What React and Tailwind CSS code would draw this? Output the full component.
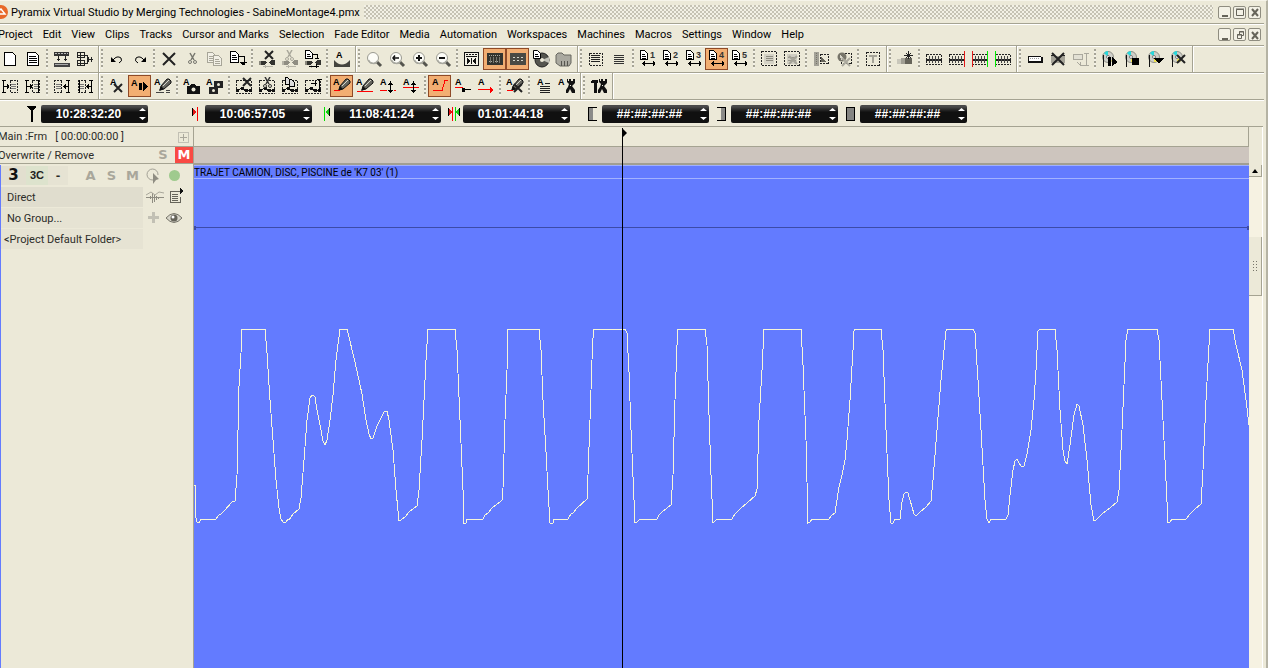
import clsx from "clsx";

const MENUS = [
  "Project", "Edit", "View", "Clips", "Tracks", "Cursor and Marks", "Selection",
  "Fade Editor", "Media", "Automation", "Workspaces", "Machines", "Macros",
  "Settings", "Window", "Help",
];

/* ---------- small drawing helpers, all on an 18x18 grid ---------- */

function Glyph({ children }) {
  return (
    <svg width="18" height="18" viewBox="0 0 18 18" shapeRendering="crispEdges" fill="none" stroke="none" aria-hidden="true" className="shrink-0">
      {children}
    </svg>
  );
}

function Letter({ x = 1, y = 8, color = "#000", children }) {
  return (
    <text x={x} y={y} fill={color} fontFamily="Liberation Sans, sans-serif" fontWeight="700" fontSize="9">
      {children}
    </text>
  );
}

function Sheet({ x = 0, y = 0, w = 9, h = 11, color = "#000", fill = "#fff", lines = true }) {
  return (
    <g transform={`translate(${x} ${y})`}>
      <path d={`M0.5 0.5h${w - 4}l3 3v${h - 4}h-${w - 1}z`} fill={fill} stroke={color} />
      {lines && <path d={`M2 4.5h${w - 5}M2 6.5h${w - 4}${h > 9 ? `M2 8.5h${w - 4}` : ""}`} stroke={color} />}
    </g>
  );
}

function Cross({ x = 0, y = 0, s = 8, color = "#222", w = 2 }) {
  return (
    <path
      d={`M${x} ${y}l${s} ${s}M${x + s} ${y}l-${s} ${s}`}
      stroke={color}
      strokeWidth={w}
      shapeRendering="auto"
    />
  );
}

function Lens({ children }) {
  return (
    <g shapeRendering="auto">
      <path d="M11 11l5 5" stroke="#55554f" strokeWidth="3" />
      <circle cx="8" cy="8" r="5.5" fill="#fdfdf8" stroke="#9a9a91" />
      <path d="M3.500 10a5 5 0 0 0 9 1" stroke="#a9a9a0" strokeWidth="1.500" />
      {children}
    </g>
  );
}

function Scissors({ x = 0, y = 0, color = "#333" }) {
  return (
    <g transform={`translate(${x} ${y})`} stroke={color} shapeRendering="auto">
      <path d="M2 0l4 7M7 0l-4 7" strokeWidth="1.500" />
      <circle cx="2" cy="9" r="1.500" />
      <circle cx="7" cy="9" r="1.500" />
    </g>
  );
}

function Pencil() {
  return (
    <g shapeRendering="auto">
      <path d="M6 13l1-4 6-7h2l2 2v2l-7 6z" fill="#66665f" stroke="#111" />
      <path d="M9 9l6-6" stroke="#d6d6cc" />
      <path d="M5 14l2-5 3 3z" fill="#111" />
    </g>
  );
}

function Reel({ dark = "#33332f", light = "#8a887d" }) {
  return (
    <>
      <path d="M1 11h3l3 2-2 2H1z" fill={light} />
      <path d="M3 11h4l2 2-3 2H3zM17 10h-4l-2 3 2 2h4z" fill={dark} />
      <path d="M5 16.500h10M7 15v3" stroke="#b5b3a6" />
    </>
  );
}

function DashBox({ x = 1.5, y = 1.5, w = 15, h = 14, color = "#222" }) {
  return <rect x={x} y={y} width={w} height={h} stroke={color} strokeDasharray="2 1" />;
}

function Disc() {
  return (
    <g shapeRendering="auto">
      <circle cx="7" cy="7" r="5.500" fill="#cfcfc8" stroke="#8f8f87" />
      <path d="M7 7L3 3a5 5 0 0 1 4-2z" fill="#27d8dc" />
      <path d="M7 7l4 4a5 5 0 0 1-4 1z" fill="#f0e34a" />
      <circle cx="7" cy="7" r="1.500" fill="#fff" stroke="#777" />
      <path d="M2.500 5v12" stroke="#111" />
    </g>
  );
}

const Recall = ({ n }) => (
  <>
    <Sheet x={1} y={0} w={8} h={10} />
    <Letter x={11} color="#333">{n}</Letter>
    <path d="M3 13.500h12M5 11v5M14 11v5M4 12v3M15 12v3" stroke="#000" />
  </>
);

const Film = ({ left, right }) => (
  <>
    <DashBox x={1.5} y={4.5} w={15} h={10} />
    <path d="M1 9.500h16" stroke="#222" strokeWidth="2" />
    <path d="M4.500 6v7M7.500 6v7M10.500 6v7M13.500 6v7" stroke="#444" />
    {left && <rect x="1" y="1" width="1" height="16" fill={left} />}
    {right && <rect x="16" y="1" width="1" height="16" fill={right} />}
  </>
);

const Jump = ({ flip, inner }) => (
  <g transform={flip ? "translate(18 0) scale(-1 1)" : undefined}>
    <path d="M2.500 3v13M1 3.500h4M1 15.500h4M3 9.500h5M6 7v5M7 8v3" stroke="#000" />
    <rect x={inner ? 8.5 : 9.5} y="3.500" width="7" height="12" stroke="#222" strokeDasharray="2 1" />
    <path d="M10 7.500h5M10 9.500h5M10 11.500h5" stroke="#777" />
    {inner && <path d="M14.500 3v13" stroke="#000" />}
  </g>
);

const Curve = ({ children }) => (
  <>
    <DashBox y={3.5} h={13} />
    <path d="M2 14l5-3 4 3 5-1" stroke="#111" />
    <path d="M1 12h3v3H1zM6 10h3v3H6zM10 12h3v3h-3zM14 12h3v3h-3z" fill="#111" />
    {children}
  </>
);

const Wrench = () => (
  <g shapeRendering="auto">
    <path d="M9 2v3l2 2-1 3-2 3v3h2l2-4 2 4h3v-3l-3-4 3-3V2h-2v2h-2V2h-2v2h-1V2z" fill="#111" />
    <path d="M12 8l1 1" stroke="#ece9d8" />
  </g>
);

const ICONS = {
  new: <Sheet x={3} y={2} w={12} h={14} lines={false} />,
  open: (
    <>
      <Sheet x={3} y={2} w={12} h={14} />
      <path d="M5 12.500h8" stroke="#000" />
    </>
  ),
  machine: (
    <>
      <path d="M1 2h15v4H1z" fill="#333" />
      <path d="M2 3.500h13" stroke="#bbb" strokeDasharray="2 1" />
      <path d="M5.500 6v5M12.500 6v5M4 9.500h3M11 9.500h3" stroke="#222" />
      <path d="M1 13h16v4H1z" fill="#444" />
      <path d="M2 14.500h13" stroke="#aaa" />
    </>
  ),
  routing: (
    <>
      <path d="M1 2.500h7v5H1zM1 10.500h7v5H1zM4.500 2v14M1 5.500h7M1 13.500h7" stroke="#222" />
      <path d="M8 5.500h3v8H8M11 9.500h6M12.500 7v5M15.500 7v5" stroke="#222" />
    </>
  ),
  undo: (
    <g shapeRendering="auto">
      <path d="M5 10q4-5 8-2 2 3-2 5" stroke="#000" />
      <path d="M3 7v5h5z" fill="#000" />
    </g>
  ),
  redo: (
    <g shapeRendering="auto">
      <path d="M13 10q-4-5-8-2-2 3 2 5" stroke="#000" />
      <path d="M15 7v5h-5z" fill="#000" />
    </g>
  ),
  delete: <Cross x={3} y={3} s={12} />,
  cut: <Scissors x={5} y={3} color="#77776f" />,
  copy: (
    <>
      <Sheet x={1} y={2} w={9} h={11} color="#a7a598" fill="#f2f0e6" />
      <Sheet x={7} y={5} w={9} h={11} color="#a7a598" fill="#f2f0e6" />
    </>
  ),
  paste: (
    <>
      <Sheet x={1} y={1} w={9} h={12} />
      <path d="M10 6.500h5v8M12 12.500h6" stroke="#000" />
      <path d="M11 12h6l-3 4z" fill="#000" />
    </>
  ),
  rippleDelete: (
    <>
      <Reel />
      <Cross x={7} y={1} s={8} />
    </>
  ),
  rippleCut: (
    <>
      <Reel dark="#8f8d82" light="#b5b3a6" />
      <Scissors x={4} y={0} color="#a9a79b" />
    </>
  ),
  ripplePaste: (
    <>
      <Reel />
      <Sheet x={1} y={0} w={8} h={9} />
      <path d="M9 4.500h4v4M11 8.500h4M5 16.500h10M12 14v4" stroke="#000" />
    </>
  ),
  fade: (
    <>
      <Letter x={3}>A</Letter>
      <path d="M1 10q8 9 16 0v7H1z" fill="#44443e" shapeRendering="auto" />
    </>
  ),
  zoom: <Lens />,
  zoomLeft: <Lens><path d="M5 8h6M7 5.500L5 8l2 2.500" stroke="#111" strokeWidth="1.500" /></Lens>,
  zoomIn: <Lens><path d="M5 8h6M8 5v6" stroke="#111" strokeWidth="2" /></Lens>,
  zoomOut: <Lens><path d="M5 8h6" stroke="#111" strokeWidth="2" /></Lens>,
  transport: (
    <>
      <rect x="1.500" y="2.500" width="14" height="13" fill="#f4f2e6" stroke="#111" />
      <path d="M3 4.500h11" stroke="#111" strokeDasharray="2 1" />
      <path d="M3 6.500h11" stroke="#111" />
      <path d="M4 8l4 3-4 3zM13 8l-4 3 4 3z" fill="#111" />
      <path d="M8.500 8v6" stroke="#111" />
    </>
  ),
  mixer: (
    <>
      <rect x="1" y="3" width="16" height="12" fill="#34342f" />
      <path d="M3 5.500h12M3 11.500h12" stroke="#a9a99f" strokeDasharray="1 1" />
      <path d="M4.500 7v6M7.500 7v6M10.500 7v6M13.500 7v6" stroke="#77776f" />
    </>
  ),
  meters: (
    <>
      <rect x="1" y="3" width="16" height="12" fill="#4a4a44" />
      <path d="M4 7.500h10M4 10.500h10" stroke="#d4d4ca" strokeDasharray="2 2" />
    </>
  ),
  library: (
    <g shapeRendering="auto">
      <circle cx="10" cy="10" r="7" fill="#55554f" stroke="#222" />
      <path d="M10 10l7-3v6z" fill="#c4c4ba" />
      <circle cx="10" cy="10" r="2" fill="#ece9d8" />
      <Sheet x={1} y={0} w={8} h={9} />
    </g>
  ),
  folder: (
    <g shapeRendering="auto">
      <path d="M1 5l2-2h4l2 2h7v8l-2 3H5l-4-3z" fill="#aaa9a0" stroke="#66665f" />
      <path d="M6.500 11v5M9.500 11v5M12.500 11v5" stroke="#55554f" />
    </g>
  ),
  listSelect: (
    <>
      <DashBox x={2.500} y={3.500} w={13} h={12} />
      <path d="M4 5.500h9M4 7.500h9M4 9.500h9M4 11.500h9" stroke="#222" />
    </>
  ),
  list: <path d="M4 5.500h10M4 7.500h10M4 9.500h10M4 11.500h10M4 13.500h10" stroke="#333" />,
  recall1: <Recall n="1" />,
  recall2: <Recall n="2" />,
  recall3: <Recall n="3" />,
  recall4: <Recall n="4" />,
  recall5: <Recall n="5" />,
  group: (
    <>
      <DashBox />
      <rect x="4" y="4" width="10" height="10" fill="#d4d2c6" />
      <path d="M6 6.500h7M6 8.500h7M6 10.500h7" stroke="#8d8b80" />
    </>
  ),
  ungroup: (
    <>
      <DashBox />
      <rect x="4" y="4" width="10" height="10" fill="#cfcdc2" />
      <path d="M5 7.500h8M5 10.500h8" stroke="#9a988d" />
      <Cross x={6} y={6} s={8} color="#a5a398" w={2} />
    </>
  ),
  lock: (
    <>
      <path d="M2 2h5v14H2z" fill="#a3a197" />
      <path d="M4.500 3v12" stroke="#77756a" strokeDasharray="1 1" />
      <DashBox x={8.500} y={4.500} w={8} h={9} />
      <path d="M9 12V7l6 5z" fill="#66645a" />
    </>
  ),
  unlock: (
    <>
      <DashBox x={6.500} y={3.500} w={10} h={10} />
      <circle cx="7" cy="7" r="4.500" fill="#77756a" shapeRendering="auto" />
      <path d="M5 5l4 3-3 2z" fill="#d8d6ca" />
      <Cross x={7} y={8} s={8} color="#aaa89d" />
    </>
  ),
  textBox: (
    <>
      <DashBox x={2.500} y={2.500} w={13} h={13} />
      <path d="M5 5.500h8M9 5v8" stroke="#a5a398" strokeWidth="2" />
    </>
  ),
  glue: (
    <>
      <path d="M1 9h5v5H1z" fill="#c9c7bb" />
      <path d="M5 8h5v6H5z" fill="#a19f94" />
      <path d="M9 8h7v6H9z" fill="#66645a" />
      <path d="M12.500 1v8M8 5.500h9M10 3l5 5M15 3l-5 5" stroke="#222" />
    </>
  ),
  film1: <Film />,
  film2: <Film right="#e01818" />,
  film3: <Film left="#e01818" right="#00e800" />,
  film4: <Film left="#00e800" />,
  marker: (
    <>
      <path d="M2.500 6.500h12l1 1v5h-13z" fill="#fff" stroke="#111" />
      <path d="M3 11.500h13M15.500 7v6" stroke="#111" strokeWidth="2" />
      <path d="M4 8.500h10" stroke="#999" strokeDasharray="1 1" />
    </>
  ),
  markerOff: (
    <>
      <path d="M2 6h14v7H2z" fill="#a5a398" />
      <Cross x={3} y={3} s={12} />
      <path d="M2 5.500h3M13 5.500h3" stroke="#222" />
    </>
  ),
  markerMove: (
    <g stroke="#aaa89d">
      <rect x="1.500" y="4.500" width="9" height="5" fill="#e2e0d4" />
      <path d="M14.500 3v13M12 3.500h5M12 15.500h5M5 12l3 3h5M8 12v4" />
    </g>
  ),
  discPlay: (
    <>
      <Disc />
      <path d="M7 7h3v9H7zM11 7l6 5-6 4z" fill="#000" />
    </>
  ),
  discStop: (
    <>
      <Disc />
      <path d="M8 8h7v7H8z" fill="#000" />
    </>
  ),
  discDown: (
    <>
      <Disc />
      <path d="M7 8h10l-5 6z" fill="#000" />
    </>
  ),
  discOff: (
    <>
      <Disc />
      <Cross x={7} y={5} s={8} />
    </>
  ),
  trimInLeft: <Jump />,
  trimInRight: <Jump inner />,
  trimOutLeft: <Jump flip />,
  trimOutRight: <Jump flip inner />,
  autoOff: (
    <>
      <Letter x={2}>A</Letter>
      <Cross x={6} y={7} s={8} />
    </>
  ),
  autoPlay: (
    <>
      <Letter x={0} y={9}>A</Letter>
      <path d="M8 6h3v7H8zM12 5l5 4-5 5z" fill="#000" />
    </>
  ),
  autoWrite: (
    <>
      <Letter x={0}>A</Letter>
      <Pencil />
      <path d="M2 15.500h8M12 15.500h4M12 13.500h4" stroke="#444" />
    </>
  ),
  snapshot: (
    <>
      <Letter x={0}>A</Letter>
      <path d="M4 9h3l1-2h4l1 2h4v8H4z" fill="#111" />
      <circle cx="10.500" cy="12.500" r="2" fill="#ece9d8" shapeRendering="auto" />
    </>
  ),
  snapshots: (
    <>
      <Letter x={0}>A</Letter>
      <path d="M8 4h9v7H8zM3 10h9v7H3z" fill="#222" />
      <g fill="#ece9d8" shapeRendering="auto">
        <circle cx="12.500" cy="7.500" r="1.500" />
        <circle cx="7.500" cy="13.500" r="1.500" />
      </g>
    </>
  ),
  curveDelete: <Curve><Cross x={8} y={1} s={8} /></Curve>,
  curveCut: <Curve><Scissors x={5} y={0} /></Curve>,
  curveCopy: (
    <Curve>
      <Sheet x={4} y={0} w={6} h={8} lines={false} fill="#ddd" />
      <Sheet x={8} y={2} w={6} h={8} lines={false} fill="#ddd" />
    </Curve>
  ),
  curveMove: <Curve><path d="M15.500 2v13M13 2.500h5M7 6.500h6M11 4v5" stroke="#000" /></Curve>,
  drawFade: (
    <>
      <Letter x={0}>A</Letter>
      <Pencil />
      <path d="M1 13.500h6" stroke="#f00" />
    </>
  ),
  drawLine: (
    <>
      <Letter x={0}>A</Letter>
      <Pencil />
      <path d="M1 14.500h16" stroke="#f00" />
    </>
  ),
  offset: (
    <>
      <Letter x={1}>A</Letter>
      <path d="M1 13.500h7M15 13.500h2" stroke="#f00" />
      <path d="M11.500 4v12M10 6.500h3M9 7.500h5M9 13.500h5M10 14.500h3" stroke="#000" />
    </>
  ),
  offsetAll: (
    <>
      <Letter x={1}>A</Letter>
      <path d="M1 10.500h16" stroke="#f00" />
      <path d="M11.500 4v12M10 6.500h3M9 7.500h5M9 13.500h5M10 14.500h3" stroke="#000" />
    </>
  ),
  ramp: (
    <>
      <Letter x={1}>A</Letter>
      <path d="M2 13.500h9l3-10h3" stroke="#f00" />
    </>
  ),
  point: (
    <>
      <Letter x={1}>A</Letter>
      <path d="M1 10.500h8" stroke="#f00" />
      <path d="M9 12.500h8" stroke="#000" />
      <path d="M8 11h3v4H8z" fill="#000" />
    </>
  ),
  trend: (
    <>
      <Letter x={1}>A</Letter>
      <path d="M1 12.500h14" stroke="#f00" />
      <path d="M13 10l4 3-4 3z" fill="#f00" />
    </>
  ),
  drawOff: (
    <>
      <Letter x={0}>A</Letter>
      <Pencil />
      <path d="M1 13.500h6" stroke="#f00" />
      <Cross x={8} y={7} s={8} />
    </>
  ),
  autoList: (
    <>
      <Letter x={2}>A</Letter>
      <path d="M10 6.500h5M5 9.500h10M5 11.500h10M5 13.500h10M5 15.500h10" stroke="#222" />
    </>
  ),
  autoTools: (
    <>
      <Letter x={0}>A</Letter>
      <Wrench />
    </>
  ),
  tools: (
    <>
      <path d="M1 4l2-1h5v3H1zM4 5h3v11H4z" fill="#111" />
      <Wrench />
    </>
  ),
};

// Bars hold groups, groups hold runs; a dotted divider stands between runs.
const FILE_BAR = [
  [["new", "open"], ["machine", "routing"]],
  [["undo", "redo"], ["delete", "cut", "copy", "paste"], ["rippleDelete", "rippleCut", "ripplePaste"], ["fade"]],
  [["zoom", "zoomLeft", "zoomIn", "zoomOut"], ["transport", "mixer", "meters", "library", "folder"]],
  [["listSelect", "list"], ["recall1", "recall2", "recall3", "recall4", "recall5"], ["group", "ungroup"], ["lock", "unlock"], ["textBox"]],
  [["glue"], ["film1", "film2", "film3", "film4"]],
  [["marker", "markerOff", "markerMove"], ["discPlay", "discStop", "discDown", "discOff"]],
];

const AUTOMATION_BAR = [
  [["trimInLeft", "trimInRight"], ["trimOutLeft", "trimOutRight"]],
  [
    ["autoOff", "autoPlay", "autoWrite"],
    ["snapshot", "snapshots"],
    ["curveDelete", "curveCut", "curveCopy", "curveMove"],
    ["drawFade", "drawLine", "offset", "offsetAll"],
    ["ramp", "point", "trend"],
    ["drawOff"],
    ["autoList", "autoTools"],
  ],
  [["tools"]],
];

const PRESSED = ["mixer", "meters", "recall4", "autoPlay", "drawFade", "ramp"];

function Dots() {
  return (
    <div className="flex w-[6px] justify-center">
      <div className="h-[20px] w-[2px] bg-[repeating-linear-gradient(#a5a396_0_2px,#f3f1e6_2px_4px)]" />
    </div>
  );
}

function ToolButton({ name }) {
  const pressed = PRESSED.includes(name);
  return (
    <button
      type="button"
      aria-label={name}
      aria-pressed={pressed}
      className={clsx(
        "flex h-[22px] w-[23px] items-center justify-center border",
        pressed ? "border-[#8f4a28] bg-[#f2ae72]" : "border-transparent",
      )}
    >
      <Glyph>{ICONS[name]}</Glyph>
    </button>
  );
}

function Toolbar({ groups, label }) {
  return (
    <div role="toolbar" aria-label={label} className="mr-[2px] flex h-[27px] items-stretch border-b border-[#a5a392] shadow-[0_1px_0_#fff]">
      <div className="-ml-[2px] flex">
        {groups.map((runs, g) => (
          <div key={g} className="flex items-center border-r border-[#a5a392] shadow-[1px_0_0_#fff]">
            {g > 0 && <Dots />}
            {runs.map((run, r) => (
              <div key={r} className="flex items-center">
                {r > 0 && <Dots />}
                {run.map((name) => (
                  <ToolButton key={name} name={name} />
                ))}
              </div>
            ))}
            <div className="w-[2px]" />
          </div>
        ))}
      </div>
    </div>
  );
}

function WindowButtons({ restore }) {
  const icons = [
    <path key="min" d="M3 9h6v2H3z" fill="#66645a" />,
    restore ? (
      <path key="res" d="M5.500 5V2.500h4v4H8M3.500 5.500h4v4h-4zM5 3h5M3 6h5" stroke="#66645a" fill="none" />
    ) : (
      <path key="max" d="M2.500 3.500h7v6h-7zM2 3h8" stroke="#66645a" fill="none" />
    ),
    <path key="close" d="M3 3l6 7M9 3l-6 7" stroke="#66645a" strokeWidth="2" fill="none" />,
  ];
  return (
    <div className="flex gap-[2px] pr-[3px]">
      {icons.map((icon, i) => (
        <button
          key={i}
          type="button"
          aria-label={["Minimize", "Maximize", "Close"][i]}
          className="flex h-[13px] w-[13px] items-center justify-center rounded-xs border border-[#8f8d80] bg-[#f3f1e6]"
        >
          <svg width="12" height="12" viewBox="0 0 12 12" className="shrink-0">{icon}</svg>
        </button>
      ))}
    </div>
  );
}

/* ---------- timecode row ---------- */

const MARKS = {
  cursor: <path d="M2 1h9v1L8 5v12H6V5L2 2z" fill="#000" />,
  markIn: (
    <>
      <path d="M3 3l5 4-5 4z" fill="#e01818" />
      <path d="M3.500 3v8" stroke="#000" />
      <path d="M8 2h1v14H8z" fill="#f00" />
    </>
  ),
  markOut: (
    <>
      <path d="M6 2h1v14H6z" fill="#00e000" />
      <path d="M12 3L7 7l5 4z" fill="#18c818" />
      <path d="M11.500 3v8" stroke="#000" />
    </>
  ),
  duration: (
    <>
      <path d="M1 3l4 4-4 4z" fill="#e01818" />
      <path d="M1.500 3v8M12.500 3v8" stroke="#000" />
      <path d="M5 2h1v14H5z" fill="#f00" />
      <path d="M8 2h1v14H8z" fill="#00e000" />
      <path d="M12 3L9 7l3 4z" fill="#18c818" />
    </>
  ),
  rangeIn: (
    <>
      <path d="M3 3h4v13H3z" fill="#8a8a88" />
      <path d="M11 2.500H2.500v13H11" stroke="#000" />
    </>
  ),
  rangeOut: (
    <>
      <path d="M6 3h4v13H6z" fill="#8a8a88" />
      <path d="M2 2.500h8.500v13H2" stroke="#000" />
    </>
  ),
  rangeLength: <rect x="2.500" y="2.500" width="8" height="13" fill="#858583" stroke="#000" />,
};

function Timecode({ mark, label, value }) {
  return (
    <div className="flex items-center gap-[3px]">
      <svg width="13" height="18" viewBox="0 0 13 18" fill="none" shapeRendering="crispEdges" className="shrink-0" aria-hidden="true">
        {MARKS[mark]}
      </svg>
      <div className="flex h-[18px] w-[107px] items-center justify-between rounded-xs bg-linear-to-b from-[#4a4a4a] from-10% to-[#101010] to-40% pr-px">
        <input
          type="text"
          aria-label={label}
          defaultValue={value}
          className="w-[95px] min-w-0 bg-transparent text-center text-xs font-bold text-white outline-none"
        />
        <svg width="9" height="14" viewBox="0 0 9 14" className="shrink-0" aria-hidden="true">
          <path d="M4.500 1L8 4H1zM4.500 13L8 10H1z" fill="#fff" />
        </svg>
      </div>
    </div>
  );
}

function TimecodeRow() {
  return (
    <div className="flex h-[26px] items-center pt-px pl-[25px]">
      <Timecode mark="cursor" label="Cursor" value="10:28:32:20" />
      <div className="ml-[41px] flex gap-[6px]">
        <Timecode mark="markIn" label="Mark in" value="10:06:57:05" />
        <Timecode mark="markOut" label="Mark out" value="11:08:41:24" />
        <Timecode mark="duration" label="Mark length" value="01:01:44:18" />
      </div>
      <div className="ml-[16px] flex gap-[6px]">
        <Timecode mark="rangeIn" label="Selection in" value="##:##:##:##" />
        <Timecode mark="rangeOut" label="Selection out" value="##:##:##:##" />
        <Timecode mark="rangeLength" label="Selection length" value="##:##:##:##" />
      </div>
    </div>
  );
}

/* ---------- track header ---------- */

function TrackHeader() {
  return (
    <aside className="flex w-[194px] shrink-0 flex-col border-r border-[#a5a392] font-[Roboto,sans-serif] text-[11px] leading-[20px] text-[#2c2c28]">
      <div className="flex h-[20px] items-center justify-between border-b border-[#a5a392] pt-px pr-[4px]">
        <span className="-ml-[2px] whitespace-pre">Main :Frm   [ 00:00:00:00 ]</span>
        <button type="button" aria-label="Add" className="flex h-[11px] w-[11px] items-center justify-center border border-[#c2c0b4]">
          <svg width="7" height="7" viewBox="0 0 7 7"><path d="M0 3.500h7M3.500 0v7" stroke="#a9a79b" /></svg>
        </button>
      </div>
      <div className="flex h-[17px] items-center border-b border-[#a5a392]">
        <span className="-ml-[2px] flex-1 pt-px">Overwrite / Remove</span>
        <button type="button" className="w-[24px] font-['DejaVu_Sans',sans-serif] text-[13px] font-bold text-[#a9a79b]">S</button>
        <button type="button" className="h-[16px] w-[18px] bg-[#f94a44] font-['DejaVu_Sans',sans-serif] text-[13px] leading-[16px] font-bold text-white">M</button>
      </div>
      <div className="mt-px flex flex-1 flex-col border-l border-[#637bff] leading-[21px]">
        <div className="flex h-[21px] items-center font-['DejaVu_Sans',sans-serif] font-bold">
          <button type="button" className="h-[19px] w-[25px] bg-[#e2dfcf] text-[15px] leading-[19px] text-[#111]">3</button>
          <button type="button" className="h-[19px] w-[22px] bg-[#dde3cd] font-['Liberation_Sans',sans-serif] text-[11px] leading-[19px] text-[#222]">3C</button>
          <button type="button" className="h-[19px] w-[20px] bg-[#e6e3d3] leading-[19px]">-</button>
          <div className="ml-[12px] flex text-[13px] text-[#a9a79b]">
            <button type="button" className="w-[21px]">A</button>
            <button type="button" className="w-[21px]">S</button>
            <button type="button" className="w-[21px]">M</button>
          </div>
          <button type="button" aria-label="Play" className="w-[21px]">
            <svg width="18" height="18" viewBox="0 0 18 18" fill="none" className="mx-auto">
              <path d="M8 13A5.500 5.500 0 1 1 13 8" stroke="#a3a196" />
              <path d="M8 6l6 6-3 1-3 4z" fill="#8f8d82" />
            </svg>
          </button>
          <button type="button" aria-label="Record ready" className="ml-[5px] h-[11px] w-[11px] rounded-full bg-[#9fca8e]" />
        </div>
        <div className="flex h-[21px] items-center">
          <button type="button" className="h-[20px] w-[142px] bg-[#e0ddce] pl-[6px] text-left">Direct</button>
          <button type="button" aria-label="Waveform" className="ml-[2px] w-[21px]">
            <svg width="20" height="16" viewBox="0 0 20 16" fill="none" stroke="#8f8d82">
              <path d="M1 8.500h18M5.500 7v3M7.500 4v10M9.500 6v7M11.500 7v4M13.500 8v2" />
              <path d="M1 6l5-3 4 3 4-3 5 1" stroke="#a9a79b" />
            </svg>
          </button>
          <button type="button" aria-label="Track options" className="ml-px w-[20px]">
            <svg width="18" height="18" viewBox="0 0 18 18" fill="none" shapeRendering="crispEdges">
              <path d="M13 3.500H3.500v11h10V9M5 6.500h6M5 8.500h6M5 10.500h6M5 12.500h6" stroke="#66645a" />
              <path d="M13 0l4 3-4 3z" fill="#111" />
            </svg>
          </button>
        </div>
        <div className="flex h-[21px] items-center">
          <button type="button" className="h-[20px] w-[142px] bg-[#e6e3d3] pl-[6px] text-left">No Group...</button>
          <button type="button" aria-label="Add group" className="ml-[5px] w-[12px]">
            <svg width="11" height="11" viewBox="0 0 11 11"><path d="M4 0h3v4h4v3H7v4H4V7H0V4h4z" fill="#c2c0b4" /></svg>
          </button>
          <button type="button" aria-label="Visible" className="ml-[5px] w-[18px]">
            <svg width="18" height="12" viewBox="0 0 18 12" fill="none">
              <path d="M1 6q8-9 16 0-8 9-16 0z" fill="#d8d6ca" stroke="#77756a" />
              <circle cx="9" cy="6" r="3.500" fill="#66645a" />
              <circle cx="8" cy="5" r="1.500" fill="#fff" />
            </svg>
          </button>
        </div>
        <div className="flex h-[21px] items-center">
          <button type="button" className="h-[20px] w-[142px] bg-[#e6e3d3] pl-[3px] text-left whitespace-nowrap">
            &lt;Project Default Folder&gt;
          </button>
        </div>
      </div>
    </aside>
  );
}

/* ---------- timeline ---------- */

const WAVE = `0,319 1,319 2,352 3,356 5,357 7,353 9,354 11,353 22,353 25,349 27,348 31,344 38,336 41,335
43,309 45,220 47,187 48,163 71,163 73,187 76,234 79,274 82,314 85,342 87,353 89,356 92,356 94,353 95,354
99,348 105,343 107,332 110,294 113,254 116,232 118,229 120,230 121,231 123,244 126,259 129,275 131,279
133,274 136,254 139,229 142,194 146,163 153,163 161,196 168,228 172,254 175,268 177,273 179,272 183,260
190,246 193,245 195,254 199,284 202,324 205,355 207,354 211,351 215,346 223,340 225,324 228,274 232,194
234,163 261,163 263,184 266,254 269,324 270,357 272,357 273,353 275,354 278,353 289,353 291,349 294,347
298,342 306,336 308,334 309,322 311,254 313,204 314,163 345,163 347,184 349,234 352,286 354,324 356,357
359,357 360,353 362,354 364,353 374,353 377,348 379,347 383,342 393,333 394,309 396,254 398,194 399,172
400,163 431,163 433,167 435,206 437,264 440,334 441,357 443,356 446,353 449,353 463,353 465,349 468,346
473,342 477,339 479,309 481,234 483,179 484,163 511,163 513,179 515,249 517,309 519,357 521,355 523,353
538,353 541,348 546,343 554,336 561,330 563,323 565,254 568,204 570,163 607,163 609,199 612,274 614,357
616,356 618,353 635,353 638,349 641,347 643,334 645,321 648,309 651,294 653,274 656,234 659,184 660,165
661,163 687,163 689,184 692,264 695,334 697,357 699,357 701,353 706,353 708,336 710,328 712,326 714,327
716,334 720,348 722,350 726,346 732,341 737,335 739,314 743,264 747,214 750,184 752,165 753,163 779,163
781,167 784,214 787,264 791,334 793,353 795,357 797,353 812,353 814,349 816,329 819,304 821,295 823,293
825,297 827,300 830,300 833,288 837,264 840,234 842,204 844,165 846,163 861,163 863,184 866,244 869,284
871,295 873,298 876,279 880,249 883,238 885,240 889,259 893,294 897,339 900,355 902,354 908,348 916,342
923,336 925,324 928,264 932,174 934,163 963,163 965,174 968,234 971,294 974,357 976,356 978,353 992,353
996,348 1001,343 1007,338 1009,304 1012,234 1015,179 1016,163 1039,163 1042,179 1048,204 1052,234 1055,259`;

function Timeline() {
  return (
    <main className="relative flex min-w-0 flex-1 flex-col">
      <div className="h-[20px] border-r border-b border-[#a5a392]" />
      <div className="h-[18px] border-b-2 border-[#a19f92] bg-[#cdc5be]" />
      <div className="relative flex-1 border-t border-[#9fb0ff] bg-[#637bff]">
        <div className="h-[13px] overflow-hidden border-b border-[#a3b2ff] font-[Roboto,sans-serif] text-[10px] leading-[13px] whitespace-nowrap text-black">
          TRAJET CAMION, DISC, PISCINE de 'K7 03' (1)
        </div>
        <svg
          className="absolute inset-0 h-full w-full"
          viewBox="0 0 1055 502"
          preserveAspectRatio="none"
          fill="none"
          shapeRendering="crispEdges"
          aria-label="Waveform"
        >
          <path d="M0 61.500h1055" stroke="#3c4ba8" />
          <path d="M0 60h2v4H0zM1053 60h2v4h-2z" fill="#3c4ba8" />
          <polyline points={WAVE} stroke="#f6f6d8" />
        </svg>
      </div>
      {/* play cursor */}
      <div className="absolute top-[1px] bottom-0 left-[428px] w-px bg-black">
        <svg width="6" height="10" viewBox="0 0 6 10" className="max-w-none"><path d="M0 0l5 5-5 5z" /></svg>
      </div>
    </main>
  );
}

function Scrollbar() {
  return (
    <div className="flex w-[14px] shrink-0 flex-col border-r border-white pt-[38px]">
      <button type="button" aria-label="Scroll up" className="flex h-[12px] items-center justify-center border-r border-b border-[#a5a392] bg-[#ece9d8]">
        <svg width="6" height="4" viewBox="0 0 6 4"><path d="M3 0l3 4H0z" /></svg>
      </button>
      <div className="flex-1 bg-[#f6f2e2] pt-[60px]">
        <div className="flex h-[59px] items-center justify-center border-r border-b border-[#a5a392] bg-[#ece9d8]">
          <div className="h-[12px] w-[6px] bg-[radial-gradient(circle,#77756a_1px,transparent_1px)] bg-size-[3px_3px]" />
        </div>
      </div>
    </div>
  );
}

export default function App() {
  return (
    <div className="flex min-h-screen flex-col overflow-hidden border-t border-r-2 border-[#f6f4ea] border-r-[#b5b3a4] bg-[#ece9d8] font-['Liberation_Sans',Arial,sans-serif] text-black">
      <header className="mr-[2px] flex h-[23px] items-center border-b border-[#a5a392] shadow-[0_1px_0_#fff]">
        <svg width="8" height="16" viewBox="0 0 8 16" className="shrink-0" aria-hidden="true">
          <circle cx="1" cy="8" r="7" fill="#e8692a" />
          <path d="M-3 8l4-3 4 5H0" fill="none" stroke="#fff" strokeWidth="1.500" />
        </svg>
        <h1 className="ml-[3px] pt-[2px] font-[Roboto,sans-serif] text-[11px] whitespace-nowrap">
          Pyramix Virtual Studio by Merging Technologies - SabineMontage4.pmx
        </h1>
        <div className="mr-[5px] ml-[4px] h-[14px] flex-1 bg-[conic-gradient(#c6c3b4_25%,#f3f1e6_0_50%,#c6c3b4_0_75%,#f3f1e6_0)] bg-size-[4px_4px]" />
        <WindowButtons />
      </header>
      <nav className="mr-[2px] flex h-[22px] items-center justify-between border-b border-[#a5a392] shadow-[0_1px_0_#fff]">
        <div className="-ml-[2px] flex gap-[10px] pt-px font-[Roboto,sans-serif] text-[11px]">
          {MENUS.map((menu) => (
            <button key={menu} type="button" className="whitespace-nowrap">{menu}</button>
          ))}
        </div>
        <WindowButtons restore />
      </nav>
      <Toolbar groups={FILE_BAR} label="Editing" />
      <Toolbar groups={AUTOMATION_BAR} label="Automation" />
      <TimecodeRow />
      <div className="mr-[3px] flex flex-1 border-t border-[#a5a392]">
        <TrackHeader />
        <Timeline />
        <Scrollbar />
      </div>
    </div>
  );
}
